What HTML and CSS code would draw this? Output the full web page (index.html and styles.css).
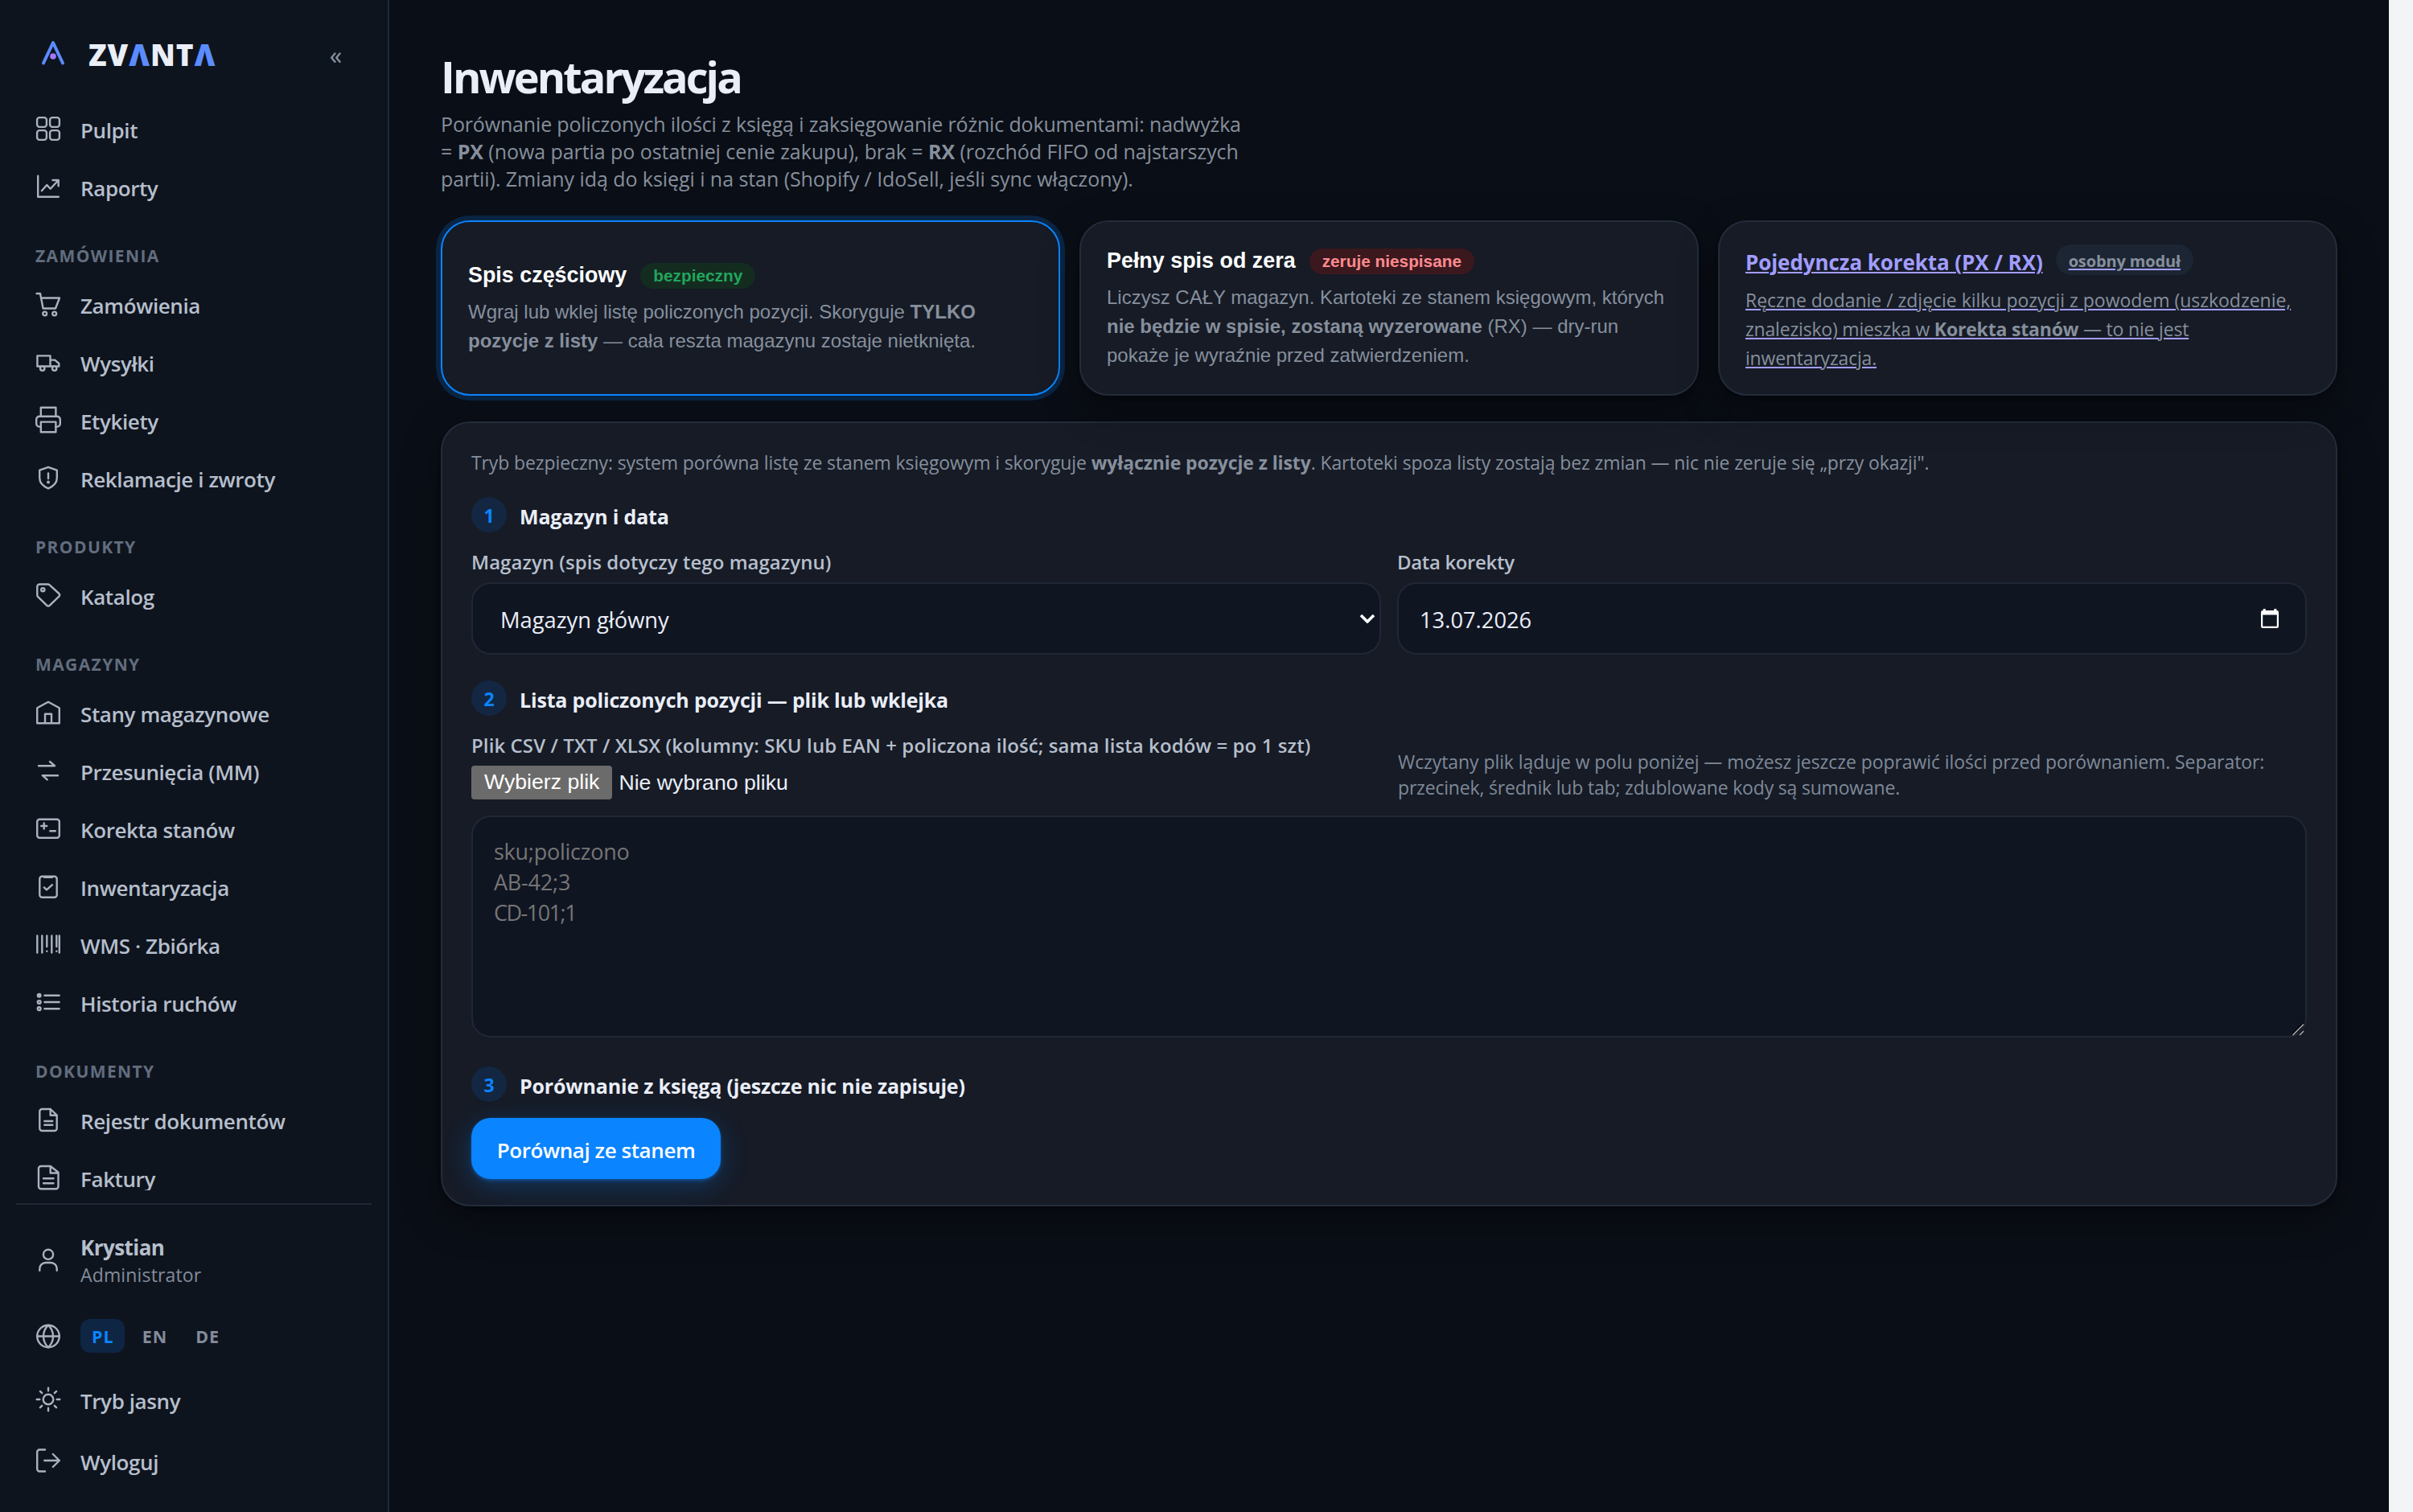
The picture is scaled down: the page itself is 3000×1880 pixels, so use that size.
FILE: index.html
```html
<!DOCTYPE html>
<html lang="pl">
<head>
<meta charset="utf-8">
<title>Inwentaryzacja – ZVANTA</title>
<link rel="stylesheet" href="styles.css">
</head>
<body>
<div class="app">
  <aside class="sidebar">
    <div class="brand">
      <svg class="brand-mark" viewBox="0 0 36 36"><path d="M6 30.5 18 5 30 30.5"/><circle cx="18" cy="22" r="3.8"/></svg>
      <span class="brand-name">ZV<i>Λ</i>NT<i>Λ</i></span>
      <span class="collapse">«</span>
    </div>
    <nav class="nav">
      <a class="item"><svg class="ico" viewBox="0 0 36 36"><rect x="4.1" y="4.1" width="11.8" height="11.8" rx="3"/><rect x="20.1" y="4.1" width="11.8" height="11.8" rx="3"/><rect x="4.1" y="20.1" width="11.8" height="11.8" rx="3"/><rect x="20.1" y="20.1" width="11.8" height="11.8" rx="3"/></svg>Pulpit</a>
      <a class="item"><svg class="ico" viewBox="0 0 36 36"><path d="M5.2 4.8v25.9h25.6M9.8 23.2l6.5-7.2 4.4 4.7L30.4 10.3M23.5 10h7.2v7.2"/></svg>Raporty</a>
      <h2 class="group">ZAMÓWIENIA</h2>
      <a class="item"><svg class="ico" viewBox="0 0 36 36"><path d="M3.6 5H8l3.6 18.5H27L32 10.5H9"/><circle cx="13.7" cy="30" r="2.4"/><circle cx="25.7" cy="30" r="2.4"/></svg>Zamówienia</a>
      <a class="item"><svg class="ico" viewBox="0 0 36 36"><path d="M8 23.5H4.4V10.4h16.1v13.1H13.4M20.5 15.6h5.8l5 4.4v3.5h-2.8M20.5 23.5H23"/><circle cx="10.7" cy="26" r="2.7"/><circle cx="25.7" cy="26" r="2.7"/></svg>Wysyłki</a>
      <a class="item"><svg class="ico" viewBox="0 0 36 36"><path d="M8.8 13.8V2.8h18.6v11M8.8 26.6H7a3.8 3.8 0 0 1-3.8-3.8v-5.2A3.8 3.8 0 0 1 7 13.8h22a3.8 3.8 0 0 1 3.8 3.8v5.2a3.8 3.8 0 0 1-3.8 3.8h-1.8"/><path d="M8.8 20.6h18.6v12.6H8.8z"/></svg>Etykiety</a>
      <a class="item"><svg class="ico" viewBox="0 0 36 36"><path d="M18 4.8 28.8 8.600v9.600c0 6-4.200 10.300-10.800 13.100C11.400 28.500 7.200 24.200 7.200 18.200V8.600zM18 12.500v6.500"/><circle class="dot" cx="18" cy="23.500" r="1.900"/></svg>Reklamacje i zwroty</a>
      <h2 class="group">PRODUKTY</h2>
      <a class="item"><svg class="ico" viewBox="0 0 36 36"><path d="M4.300 7.500a3 3 0 0 1 3-3h10.300c.8 0 1.500.3 2.100.8l11.600 10.700c1.200 1.100 1.200 2.500 0 3.600L19.700 30.800c-1 1-2.400 1-3.400 0L5.300 20.200a3.200 3.200 0 0 1-1-2.300z"/><circle cx="11.300" cy="11.200" r="2.100"/></svg>Katalog</a>
      <h2 class="group">MAGAZYNY</h2>
      <a class="item"><svg class="ico" viewBox="0 0 36 36"><path d="M4.200 31.300v-19L18 4.800l13.800 7.500v19zM14 31.300V19.800h8v11.500"/></svg>Stany magazynowe</a>
      <a class="item"><svg class="ico" viewBox="0 0 36 36"><path d="M6 12.200h20l-6-5.200M30 24.200H10.800l5.900 5.200"/></svg>Przesunięcia (MM)</a>
      <a class="item"><svg class="ico" viewBox="0 0 36 36"><rect x="4.200" y="6.800" width="27.600" height="23" rx="3"/><path d="M12.700 11.500v7M9.200 15h7M20.300 21.200h6.500"/></svg>Korekta stanów</a>
      <a class="item"><svg class="ico" viewBox="0 0 36 36"><rect x="7.300" y="5.800" width="21.400" height="26" rx="3"/><path d="M13 6.800h10M12.800 19.400l3.200 3 7-6.200"/></svg>Inwentaryzacja</a>
      <a class="item"><svg class="ico" viewBox="0 0 36 36"><path d="M4.300 7.500v21M10.300 7.500v21M16.300 7.500v13.500M22.300 7.500v21M28.300 7.500v13.500M31.800 7.500v21M16.300 26.600v.1M28.300 26.600v.1"/></svg>WMS · Zbiórka</a>
      <a class="item"><svg class="ico" viewBox="0 0 36 36"><path d="M13.400 9.800h18.200M13.400 18h18.200M13.400 26.200h18.200"/><circle class="dot" cx="6.700" cy="9.800" r="3"/><circle cx="6.700" cy="18" r="1.900"/><circle cx="6.700" cy="26.200" r="1.900"/></svg>Historia ruchów</a>
      <h2 class="group">DOKUMENTY</h2>
      <a class="item"><svg class="ico" viewBox="0 0 36 36"><path d="M20.700 5H10.300a3 3 0 0 0-3 3v21a3 3 0 0 0 3 3h15.400a3 3 0 0 0 3-3V12.600zM20.700 5v7.800h8M13.300 20h10M13.300 24.800h10"/></svg>Rejestr dokumentów</a>
      <a class="item"><svg class="ico" viewBox="0 0 36 36"><path d="M20.700 4H9a3 3 0 0 0-3 3v22.300a3 3 0 0 0 3 3h18.500a3 3 0 0 0 3-3V11.800zM20.700 4v8.500h9.500M12 19.300h12.500M12 25.200h12.500"/></svg>Faktury</a>
    </nav>
    <div class="foot">
      <div class="user">
        <svg class="ico" viewBox="0 0 36 36"><circle cx="18" cy="9.800" r="6.100"/><path d="M7.300 29.700v-2.200a7.500 7.500 0 0 1 7.500-7.500h6.400a7.500 7.500 0 0 1 7.500 7.500v2.200"/></svg>
        <div><div class="user-name">Krystian</div><div class="user-role">Administrator</div></div>
      </div>
      <div class="lang">
        <svg class="ico" viewBox="0 0 36 36"><circle cx="18" cy="18.500" r="13.800"/><path d="M4.200 18.500h27.600M18 4.700c4.200 4 6 8.600 6 13.800s-1.800 9.800-6 13.800c-4.200-4-6-8.600-6-13.800s1.800-9.800 6-13.800z"/></svg>
        <div class="langs"><span class="on">PL</span><span>EN</span><span>DE</span></div>
      </div>
      <a class="item tall"><svg class="ico" viewBox="0 0 36 36"><circle cx="18" cy="18" r="6.300"/><path d="M18 3.700v3.600M18 28.700v3.600M3.700 18h3.600M28.700 18h3.600M7.900 7.900l2.300 2.300M25.800 25.800l2.300 2.300M7.900 28.100l2.300-2.300M25.800 10.200l2.300-2.300"/></svg>Tryb jasny</a>
      <a class="item tall"><svg class="ico" viewBox="0 0 36 36"><path d="M14 31.500H7.200a3 3 0 0 1-3-3v-21a3 3 0 0 1 3-3H14M13.300 18h18.500M23.800 10l8 8-8 8"/></svg>Wyloguj</a>
    </div>
  </aside>

  <main class="main">
    <h1>Inwentaryzacja</h1>
    <p class="lead">Porównanie policzonych ilości z księgą i zaksięgowanie różnic dokumentami: nadwyżka<br><span class="wide">= <b>PX</b> (nowa partia po ostatniej cenie zakupu), brak = <b>RX</b> (rozchód FIFO od najstarszych</span><br><span class="wide">partii). Zmiany idą do księgi i na stan (Shopify / IdoSell, jeśli sync włączony).</span></p>

    <div class="modes">
      <div class="mode selected">
        <div class="mode-head"><span>Spis częściowy</span><span class="badge ok">bezpieczny</span></div>
        <p>Wgraj lub wklej listę policzonych pozycji. Skoryguje <b>TYLKO<br>pozycje z listy</b> — cała reszta magazynu zostaje nietknięta.</p>
      </div>
      <div class="mode">
        <div class="mode-head"><span>Pełny spis od zera</span><span class="badge danger">zeruje niespisane</span></div>
        <p>Liczysz CAŁY magazyn. Kartoteki ze stanem księgowym, których<br><b>nie będzie w spisie, zostaną wyzerowane</b> (RX) — dry-run<br>pokaże je wyraźnie przed zatwierdzeniem.</p>
      </div>
      <a class="mode link">
        <div class="mode-head"><span>Pojedyncza korekta (PX / RX)</span><span class="badge muted">osobny moduł</span></div>
        <p>Ręczne dodanie / zdjęcie kilku pozycji z powodem (uszkodzenie,<br><span class="tight">znalezisko) mieszka w <b>Korekta stanów</b> — to nie jest</span><br><span class="tight">inwentaryzacja.</span></p>
      </a>
    </div>

    <section class="panel">
      <p class="intro">Tryb bezpieczny: system porówna listę ze stanem księgowym i skoryguje <b>wyłącznie pozycje z listy</b>. Kartoteki spoza listy zostają bez zmian — nic nie zeruje się „przy okazji".</p>

      <div class="step first"><span class="num">1</span><h3>Magazyn i data</h3></div>
      <div class="cols">
        <div>
          <div class="label">Magazyn (spis dotyczy tego magazynu)</div>
          <div class="field select"><span>Magazyn główny</span><svg class="chev" viewBox="0 0 20 12"><path d="M2 2l8 8 8-8"/></svg></div>
        </div>
        <div>
          <div class="label short">Data korekty</div>
          <div class="field date"><span>13.07.2026</span><svg class="cal" viewBox="0 0 22 24"><path d="M2.700 0h3v2h10.600V0h3v2A2.500 2.500 0 0 1 22 4.500v17a2.500 2.500 0 0 1-2.500 2.500h-17A2.500 2.500 0 0 1 0 21.500v-17A2.500 2.500 0 0 1 2.700 2zM2.200 7.500v14.300h17.600V7.500z"/></svg></div>
        </div>
      </div>

      <div class="step second"><span class="num">2</span><h3>Lista policzonych pozycji — plik lub wklejka</h3></div>
      <div class="cols">
        <div>
          <div class="label file-label">Plik CSV / TXT / XLSX (kolumny: SKU lub EAN + policzona ilość; sama lista kodów = po 1 szt)</div>
          <div class="file"><span class="file-btn">Wybierz plik</span><span>Nie wybrano pliku</span></div>
        </div>
        <p class="hint">Wczytany plik ląduje w polu poniżej — możesz jeszcze poprawić ilości przed porównaniem. Separator:<br><span class="tight">przecinek, średnik lub tab; zdublowane kody są sumowane.</span></p>
      </div>
      <div class="area">sku;policzono<br><span class="digits">AB-42;3</span><br><span class="digits more">CD-101;1</span><svg class="grip" viewBox="0 0 16 16"><path class="sh" d="M.5 14 14 .5M9.500 14l4.500-4.500"/><path d="M1.500 15 15 1.500M10 15l5-5"/></svg></div>

      <div class="step third"><span class="num">3</span><h3>Porównanie z księgą (jeszcze nic nie zapisuje)</h3></div>
      <button class="cta">Porównaj ze stanem</button>
    </section>
  </main>
  <div class="gutter"></div>
</div>
</body>
</html>
```
FILE: styles.css
```css
* { box-sizing: border-box; margin: 0; padding: 0; }
html, body { height: 100%; }
body {
  background: #0a0e16;
  color: #eaeef7;
  font-family: "Open Sans", "Noto Sans", sans-serif;
  overflow: hidden;
}
.app { display: flex; width: 3000px; height: 1880px; white-space: nowrap; }

/* Sidebar */
.sidebar {
  width: 484px;
  flex: none;
  display: flex;
  flex-direction: column;
  background: #0e141e;
  border-right: 2px solid #212936;
  padding: 36px 20px 24px;
}
.brand { display: flex; align-items: center; height: 64px; padding: 0 37px 0 28px; margin-bottom: 26px; }
.brand-mark { width: 36px; height: 36px; margin-top: -4px; fill: none; stroke: #5b8cff; stroke-width: 4; stroke-linecap: round; stroke-linejoin: round; }
.brand-mark circle { fill: #a078ff; stroke: none; }
.brand-name { font-size: 37px; line-height: 64px; font-weight: 800; letter-spacing: 1px; margin-left: 26px; }
.brand-name i { font-style: normal; color: #5b8cff; }
.collapse { margin-left: auto; font-size: 31px; line-height: 28px; color: #8b94a3; }
.nav { height: 1354px; overflow: hidden; flex: none; }
.item {
  display: flex;
  align-items: center;
  gap: 22px;
  height: 72px;
  padding: 0 22px;
  color: #b6bfcc;
  font-size: 26px;
  font-weight: 600;
  letter-spacing: -0.4px;
}
.item.tall { height: 76px; }
.ico {
  width: 36px; height: 36px; flex: none; margin-top: -4px;
  fill: none; stroke: #a9b2bf; stroke-width: 2.4; stroke-linecap: round; stroke-linejoin: round;
}
.ico .dot { fill: #a9b2bf; stroke: none; }
.group { padding: 34px 24px 12px; font-size: 21px; line-height: 28px; font-weight: 700; letter-spacing: 1.4px; color: #626d7e; }
.foot { margin-top: 16px; border-top: 2px solid #212936; padding-top: 20px; }
.user { display: flex; align-items: center; gap: 22px; height: 100px; padding: 0 22px; }
.user .ico { margin-top: 0; }
.user-name { font-size: 26px; line-height: 34px; font-weight: 700; letter-spacing: -0.55px; color: #b6bfcc; }
.user-role { font-size: 23px; line-height: 34px; letter-spacing: 0.15px; color: #828c9b; }
.lang { display: flex; align-items: center; gap: 22px; height: 86px; padding: 0 22px; }
.lang .ico { margin-top: 0; }
.langs { display: flex; gap: 8px; }
.langs span { height: 42px; padding: 0 13px 0 14px; border-radius: 12px; font-size: 21.500px; line-height: 44px; font-weight: 700; letter-spacing: 1px; color: #828c9b; }
.langs .on { background: #0e2544; color: #0a84ff; }

/* Page */
.main { flex: 1; padding: 63px 64px 0; }
h1 { font-size: 54px; line-height: 64px; font-weight: 700; letter-spacing: -2.95px; }
.lead { margin: 10px 0 35px; font-size: 25px; line-height: 34px; letter-spacing: -0.16px; color: #868f9c; }
.wide { letter-spacing: -0.06px; }
.modes { display: grid; grid-template-columns: repeat(3, 1fr); gap: 24px; }
.mode {
  height: 218px;
  display: flex;
  flex-direction: column;
  justify-content: center;
  padding: 0 32px;
  background: #161b26;
  border: 2px solid #232c3a;
  border-radius: 36px;
  box-shadow: 0 2px 4px rgba(0,0,0,.3), 0 16px 48px rgba(0,0,0,.35);
  font-family: "Liberation Sans", Arial, sans-serif;
}
.mode.selected { border-color: #0a84ff; box-shadow: 0 0 0 6px rgba(10,132,255,.2); }
.mode-head { display: flex; align-items: flex-start; gap: 17px; margin-bottom: 12px; font-size: 26.9px; line-height: 34px; height: 33px; font-weight: 700; color: #fff; }
.mode p { font-size: 24px; line-height: 36px; color: #868f9c; }
.badge { margin-top: 2px; height: 32px; padding: 0 16px; border-radius: 16px; font-size: 20.8px; line-height: 31px; }
.ok { background: #142c20; color: #22a55c; }
.danger { background: #3b181d; color: #ff8a8f; }
.muted { background: #1c2533; color: #868f9c; }
.link { justify-content: flex-start; padding-top: 28px; font-family: "Open Sans", "Noto Sans", sans-serif; }
.link .mode-head { font-size: 26px; line-height: 45px; height: 44px; gap: 16px; letter-spacing: -0.08px; color: #a29dff; margin-bottom: 7px; }
.link .mode-head span, .link p {
  text-decoration: underline 2px #a29dff;
  text-underline-offset: 2px;
}
.link .badge { margin-top: 0; height: 38px; border-radius: 19px; font-size: 20px; line-height: 41px; letter-spacing: -0.14px; }
.link p { font-size: 23px; letter-spacing: -0.02px; }
.link .tight { letter-spacing: -0.19px; }

.panel {
  margin-top: 32px;
  height: 976px;
  padding: 31px 36px 0;
  background: #161b26;
  border: 2px solid #232c3a;
  border-radius: 36px;
  box-shadow: 0 2px 4px rgba(0,0,0,.3), 0 16px 48px rgba(0,0,0,.35);
}
.intro { font-size: 23px; line-height: 36px; letter-spacing: -0.11px; color: #868f9c; }
.step { display: flex; align-items: center; gap: 16px; height: 44px; }
.step.first { margin: 25px 0 19px; }
.step.second { margin: 32px 0 19px; }
.step.third { margin: 36px 0 20px; }
.num { width: 44px; height: 44px; border-radius: 50%; background: #132743; color: #0a84ff; font-size: 23px; line-height: 46px; font-weight: 700; text-align: center; }
h3 { font-size: 25px; line-height: 44px; font-weight: 700; letter-spacing: -0.18px; padding-top: 4px; }
.cols { display: grid; grid-template-columns: 1fr 1fr; gap: 20px; align-items: end; }
.label { font-size: 24px; line-height: 36px; font-weight: 600; letter-spacing: 0.03px; margin-bottom: 7px; color: #b6bfcc; }
.short { letter-spacing: -0.35px; }
.file-label { letter-spacing: 0.09px; }
.field {
  display: flex; align-items: center; justify-content: space-between;
  height: 90px;
  background: #101522;
  border: 2px solid #202735;
  border-radius: 24px;
  font-size: 27.3px;
}
.select { padding: 2px 5px 0 34px; }
.select .chev { margin-top: -2px; }
.date { padding: 2px 33px 0 26px; }
.date .cal { margin-top: -2px; }
.chev { width: 20px; height: 12px; fill: none; stroke: #fff; stroke-width: 3.6; }
.cal { width: 22px; height: 24px; fill: #fff; }
.file { display: flex; align-items: center; gap: 8px; height: 42px; font: 26.67px "Liberation Sans", Arial, sans-serif; }
.file-btn { height: 42px; padding: 0 16px; line-height: 41px; background: #6b6b6b; color: #fff; border-radius: 4px; }
.hint { font-size: 23px; line-height: 32px; letter-spacing: -0.08px; color: #7f8998; padding-left: 1px; margin-bottom: -1px; }
.hint .tight { letter-spacing: -0.19px; }
.area {
  position: relative;
  height: 276px;
  margin-top: 20px;
  padding: 24px 26px;
  background: #101522;
  border: 2px solid #202735;
  border-radius: 24px;
  font-size: 27px;
  line-height: 38px;
  letter-spacing: -0.25px;
  color: #757575;
}
.area .digits { letter-spacing: -0.2px; }
.area .more { letter-spacing: -1.5px; }
.grip { position: absolute; right: 1px; bottom: 0; width: 16px; height: 16px; fill: none; stroke: #aaa; stroke-width: 1.6; }
.grip .sh { stroke: #000; }
.cta {
  display: block;
  width: 310px;
  height: 76px;
  border: 0;
  border-radius: 24px;
  padding-top: 3px;
  background: #0a84ff;
  color: #fff;
  font: 600 26px "Open Sans", "Noto Sans", sans-serif;
  letter-spacing: -0.42px;
  box-shadow: 0 2px 4px rgba(10,132,255,.4), 0 8px 32px rgba(10,132,255,.28);
}
.gutter { width: 30px; flex: none; background: #f3f4f6; }
```
